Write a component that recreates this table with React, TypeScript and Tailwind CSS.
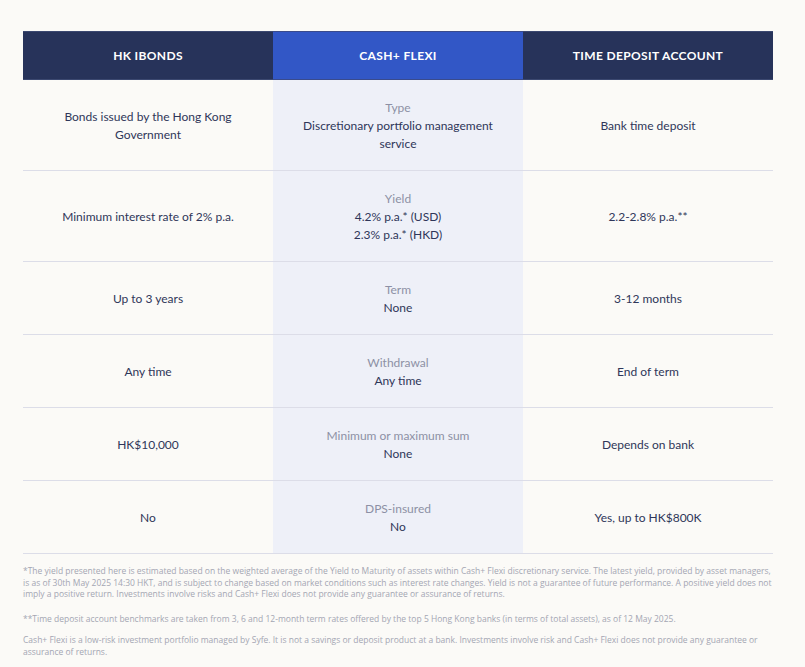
const rows = [
  { left: ['Bonds issued by the Hong Kong', 'Government'], label: 'Type', mid: ['Discretionary portfolio management', 'service'], right: ['Bank time deposit'], tall: true },
  { left: ['Minimum interest rate of 2% p.a.'], label: 'Yield', mid: ['4.2% p.a.* (USD)', '2.3% p.a.* (HKD)'], right: ['2.2-2.8% p.a.**'], tall: true },
  { left: ['Up to 3 years'], label: 'Term', mid: ['None'], right: ['3-12 months'] },
  { left: ['Any time'], label: 'Withdrawal', mid: ['Any time'], right: ['End of term'] },
  { left: ['HK$10,000'], label: 'Minimum or maximum sum', mid: ['None'], right: ['Depends on bank'] },
  { left: ['No'], label: 'DPS-insured', mid: ['No'], right: ['Yes, up to HK$800K'] },
]

export default function App() {
  return (
    <div className="min-h-[667px] bg-[#fbfaf7] px-[23px] pt-[31px] font-['Lato',sans-serif] text-[#2f3659]">
      <div className="w-[750px]">
        <div className="grid grid-cols-3 h-[49px] text-white text-[12px] font-bold tracking-[0.03em] uppercase">
          <div className="bg-[#27335a] flex items-center justify-center border-y border-[#3b4870]">HK iBonds</div>
          <div className="bg-[#3257c6] flex items-center justify-center border-y border-[#3a4b8c]">Cash+ Flexi</div>
          <div className="bg-[#27335a] flex items-center justify-center border-y border-[#3b4870]">Time Deposit Account</div>
        </div>
        {rows.map((r, i) => (
          <div key={i} className={`grid grid-cols-3 text-[12px] leading-[18px] text-center border-b border-[#dcdde8] ${r.tall ? 'h-[91px]' : 'h-[73px]'}`}>
            <div className="flex flex-col items-center justify-center pt-[2px]">
              {r.left.map((t) => <span key={t}>{t}</span>)}
            </div>
            <div className="flex flex-col items-center justify-center pt-[2px] bg-[#eef0f8]">
              <span className="text-[#8d90a5]">{r.label}</span>
              {r.mid.map((t) => <span key={t}>{t}</span>)}
            </div>
            <div className="flex flex-col items-center justify-center pt-[2px]">
              {r.right.map((t) => <span key={t}>{t}</span>)}
            </div>
          </div>
        ))}
        <div className="pt-[11px] text-[8.5px] leading-[11.5px] text-[#a4a6b3] font-['Open_Sans',sans-serif]">
          <p>*The yield presented here is estimated based on the weighted average of the Yield to Maturity of assets within Cash+ Flexi discretionary service. The latest yield, provided by asset managers, is as of 30th May 2025 14:30 HKT, and is subject to change based on market conditions such as interest rate changes. Yield is not a guarantee of future performance. A positive yield does not imply a positive return. Investments involve risks and Cash+ Flexi does not provide any guarantee or assurance of returns.</p>
          <p className="mt-[13px]">**Time deposit account benchmarks are taken from 3, 6 and 12-month term rates offered by the top 5 Hong Kong banks (in terms of total assets), as of 12 May 2025.</p>
          <p className="mt-[10px]">Cash+ Flexi is a low-risk investment portfolio managed by Syfe. It is not a savings or deposit product at a bank. Investments involve risk and Cash+ Flexi does not provide any guarantee or assurance of returns.</p>
        </div>
      </div>
    </div>
  )
}
